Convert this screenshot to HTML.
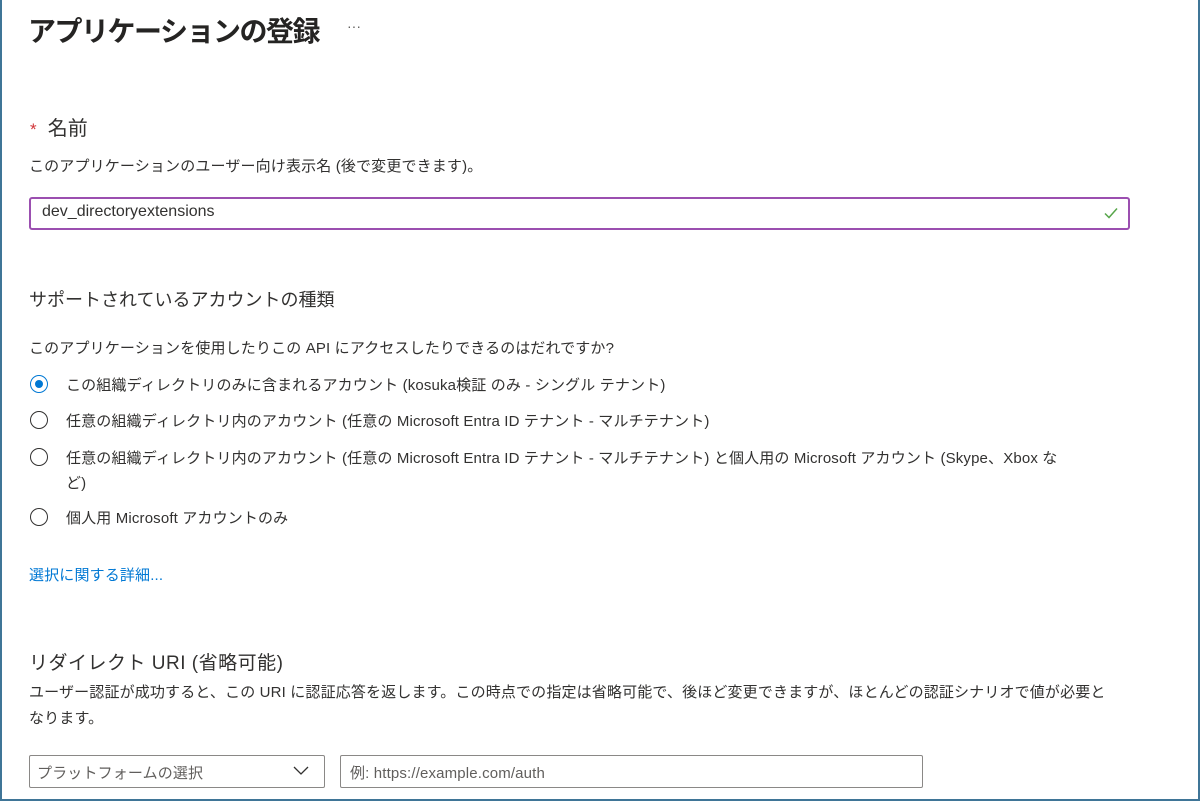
<!DOCTYPE html>
<html><head><meta charset="utf-8"><style>
html,body{margin:0;padding:0;}
body{width:1200px;height:801px;position:relative;background:#fff;font-family:"Liberation Sans","Noto Sans CJK JP",sans-serif;color:#323130;overflow:hidden;}
.frame{position:absolute;left:0;top:-3px;width:1196px;height:800px;border:2px solid #3f7597;}
.a{position:absolute;white-space:nowrap;}
.t{font-size:15px;letter-spacing:0.15px;}
.radio{position:absolute;left:30px;width:18px;height:18px;border:1.5px solid #323130;border-radius:50%;box-sizing:border-box;}
.radio.on{border-color:#0078d4;}
.radio.on::after{content:"";position:absolute;left:3.5px;top:3.5px;width:8px;height:8px;border-radius:50%;background:#0078d4;}
.box{position:absolute;box-sizing:border-box;border:1px solid #8a8886;border-radius:2px;}
</style></head><body>
<div class="frame"></div>
<div class="a" style="left:28px;top:10px;font-size:28px;font-weight:bold;color:#252423;letter-spacing:-1.5px;">アプリケーションの登録</div>
<div class="a" style="left:347px;top:18px;font-size:14px;color:#605e5c;">···</div>
<div class="a" style="left:30px;top:112px;font-size:20px;"><span style="color:#d13438;font-size:17px;">*</span>&nbsp; 名前</div>
<div class="a t" style="left:29px;top:155px;">このアプリケーションのユーザー向け表示名 (後で変更できます)。</div>
<div style="position:absolute;left:29px;top:197px;width:1101px;height:33px;box-sizing:border-box;border:2px solid #9b4fb0;border-radius:3px;"></div>
<div class="a" style="left:42px;top:203px;font-size:16px;">dev_directoryextensions</div>
<svg class="a" style="left:1103px;top:206px" width="16" height="14" viewBox="0 0 16 14"><path d="M2 7.5 L6 11.5 L14 2.5" fill="none" stroke="#57a64a" stroke-width="1.5"/></svg>
<div class="a" style="left:29px;top:286px;font-size:18px;">サポートされているアカウントの種類</div>
<div class="a t" style="left:29px;top:337px;">このアプリケーションを使用したりこの API にアクセスしたりできるのはだれですか?</div>
<div class="radio on" style="top:375px;"></div>
<div class="a t" style="left:66px;top:374px;">この組織ディレクトリのみに含まれるアカウント (kosuka検証 のみ - シングル テナント)</div>
<div class="radio" style="top:411px;"></div>
<div class="a t" style="left:66px;top:410px;">任意の組織ディレクトリ内のアカウント (任意の Microsoft Entra ID テナント - マルチテナント)</div>
<div class="radio" style="top:448px;"></div>
<div class="a t" style="left:66px;top:447px;">任意の組織ディレクトリ内のアカウント (任意の Microsoft Entra ID テナント - マルチテナント) と個人用の Microsoft アカウント (Skype、Xbox な</div>
<div class="a t" style="left:66px;top:472px;">ど)</div>
<div class="radio" style="top:508px;"></div>
<div class="a t" style="left:66px;top:507px;">個人用 Microsoft アカウントのみ</div>
<div class="a t" style="left:29px;top:564px;color:#0078d4;">選択に関する詳細...</div>
<div class="a" style="left:29px;top:648px;font-size:19px;letter-spacing:0.5px;">リダイレクト URI (省略可能)</div>
<div class="a t" style="left:29px;top:681px;">ユーザー認証が成功すると、この URI に認証応答を返します。この時点での指定は省略可能で、後ほど変更できますが、ほとんどの認証シナリオで値が必要と</div>
<div class="a t" style="left:29px;top:707px;">なります。</div>
<div class="box" style="left:29px;top:755px;width:296px;height:33px;"></div>
<div class="a t" style="left:37px;top:762px;color:#605e5c;">プラットフォームの選択</div>
<svg class="a" style="left:293px;top:766px" width="16" height="10" viewBox="0 0 16 10"><path d="M1 1 L8 8 L15 1" fill="none" stroke="#323130" stroke-width="1.3"/></svg>
<div class="box" style="left:340px;top:755px;width:583px;height:33px;"></div>
<div class="a t" style="left:350px;top:762px;color:#605e5c;">例: https://example.com/auth</div>
</body></html>
